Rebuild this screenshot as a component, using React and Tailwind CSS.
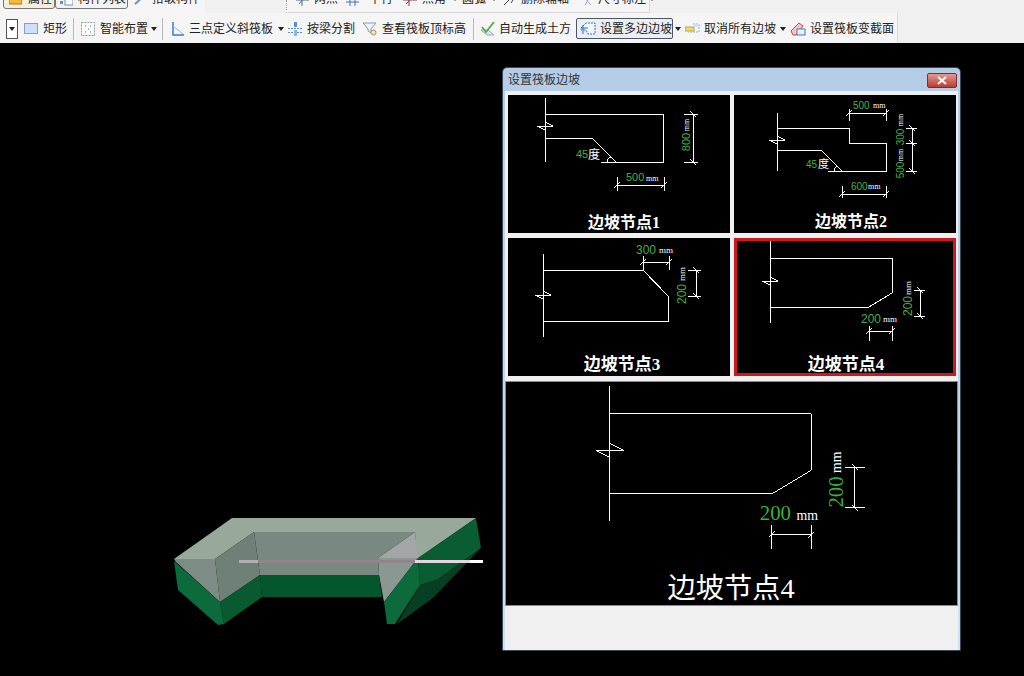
const SANS = '"Liberation Sans","Noto Sans CJK SC",sans-serif'
const SERIF = '"Liberation Serif","Noto Sans CJK SC",serif'
const GREEN = "#45b045"

function Arrow({ className }) {
  return <span className={`w-0 h-0 border-x-[3px] border-x-transparent border-t-[4px] border-t-[#222] ${className}`}></span>
}

function Sep({ className }) {
  return <span className={`w-px h-[22px] bg-[#b8b8b8] ${className}`}></span>
}

function Icon({ className, w = 15, children }) {
  return (
    <svg width={w} height="16" viewBox={`0 0 ${w} 16`} className={`shrink-0 ${className}`}>
      {children}
    </svg>
  )
}

function Label({ className, children }) {
  return <span className={`whitespace-nowrap ${className}`}>{children}</span>
}

function TopBar() {
  return (
    <div className="h-[13px] flex overflow-hidden text-xs leading-4 text-[#222]">
      <div className="w-[205px] h-[13px] bg-[#f5f5f5]">
        <div className="h-[20px] -mt-[11px] flex items-center">
          <div className="ml-[3px] w-[52px] h-[20px] flex items-center border border-[#777] rounded-[3px] bg-[#f7edd8]">
            <Icon w={13} className="ml-[5px]">
              <rect x="0" y="4" width="13" height="9" fill="#f2b93c" stroke="#a8752a" />
              <path d="M2 9l4-3 2 2 3-2" stroke="#fff" fill="none" />
            </Icon>
            <Label className="ml-[6px]">属性</Label>
          </div>
          <div className="w-[73px] h-[20px] flex items-center border border-[#777] rounded-[3px] bg-[#f2f2f2]">
            <Icon w={13} className="ml-[4px]">
              <rect x="0" y="5" width="3" height="3" fill="#6d8fc0" />
              <rect x="0" y="10" width="3" height="3" fill="#6d8fc0" />
              <rect x="5" y="3" width="8" height="11" fill="#fff" stroke="#6d8fc0" />
            </Icon>
            <Label className="ml-[5px]">构件列表</Label>
          </div>
          <Icon w={13} className="ml-[5px]">
            <path d="M2 13L11 5" stroke="#6d8fc0" strokeWidth="2" />
          </Icon>
          <Label className="ml-[6px]">拾取构件</Label>
        </div>
      </div>
      <div className="w-[80px] bg-[#f0f0f0]"></div>
      <div className="w-[365px] h-[13px] flex items-start bg-[#f5f5f5] border-r border-b border-[#d8d8d8]">
        <span className="w-[2px] h-[10px] ml-px border-l border-dotted border-[#999]"></span>
        <div className="flex items-center -mt-[9px]">
          <Icon w={13} className="ml-[9px]">
            <path d="M0 9H13M3 13L10 5M6 5V15" stroke="#5a6a80" fill="none" />
          </Icon>
          <Label className="ml-[5px]">两点</Label>
          <Icon w={13} className="ml-[8px]">
            <path d="M0 7H13M0 11H13M4 4V15M9 4V15" stroke="#4a6fb0" fill="none" />
          </Icon>
          <Label className="ml-[10px]">平行</Label>
          <Icon w={15} className="ml-[10px]">
            <path d="M0 9H14M3 13L11 5M6 5V15" stroke="#8a3a4a" fill="none" />
          </Icon>
          <Label className="ml-[4px]">点角</Label>
          <Arrow className="ml-[6px]" />
          <Label className="ml-[4px]">圆弧</Label>
          <Arrow className="ml-[5px]" />
          <Icon w={13} className="ml-[6px]">
            <path d="M1 14L8 7M8 12L12 6" stroke="#444" fill="none" />
          </Icon>
          <Label className="ml-[5px]">删除辅轴</Label>
          <Icon w={12} className="ml-[12px]">
            <path d="M2 5L10 14M9 6L4 14" stroke="#aab" fill="none" />
          </Icon>
          <Label className="ml-[5px]">尺寸标注</Label>
          <Arrow className="ml-[3px]" />
        </div>
      </div>
    </div>
  )
}

function ToolBar() {
  return (
    <div className="h-[30px] flex">
      <div className="w-[898px] h-[30px] pt-px flex items-center bg-[#f5f5f5] border-r border-[#d8d8d8] text-xs text-[#222]">
        <button className="ml-[6px] w-[12px] h-[20px] flex items-center justify-center bg-white border border-[#555]">
          <Arrow className="" />
        </button>
        <Icon w={14} className="ml-[6px]">
          <rect x="0.5" y="2.5" width="13" height="10" fill="#cfe0f7" stroke="#7f9fcc" />
        </Icon>
        <Label className="ml-[5px]">矩形</Label>
        <Sep className="ml-[6px]" />
        <Icon w={14} className="ml-[7px]">
          <rect x="0.5" y="1.5" width="13" height="13" fill="#fff" stroke="#8a9aaa" strokeDasharray="2 1" />
          <path d="M4 5h1M9 5h1M7 8h1M4 11h1M9 11h1" stroke="#2f7f4f" />
        </Icon>
        <Label className="ml-[5px]">智能布置</Label>
        <Arrow className="ml-[3px]" />
        <Sep className="ml-[5px]" />
        <Icon w={14} className="ml-[8px]">
          <path d="M2 1V14H13" stroke="#3f79c9" strokeWidth="1.5" fill="none" />
          <path d="M2 5L12 13" stroke="#8fb4e0" fill="none" />
        </Icon>
        <Label className="ml-[4px]">三点定义斜筏板</Label>
        <Arrow className="ml-[5px]" />
        <Icon w={15} className="ml-[4px]">
          <path d="M0 7.5H15M0 11.5H15" stroke="#5c8fd0" strokeDasharray="2 1" />
          <rect x="6" y="1" width="3" height="5" fill="#5c8fd0" />
          <rect x="6" y="9" width="3" height="6" fill="#8fb4e0" />
        </Icon>
        <Label className="ml-[4px]">按梁分割</Label>
        <Icon w={16} className="ml-[7px]">
          <path d="M1 2H14L9 8V12L6 10V8Z" fill="#eef3f9" stroke="#8a9ab0" />
          <circle cx="11.5" cy="11.5" r="2.5" fill="#f3e3c0" stroke="#b88a4a" />
        </Icon>
        <Label className="ml-[4px]">查看筏板顶标高</Label>
        <Sep className="ml-[7px]" />
        <Icon w={15} className="ml-[6px]">
          <path d="M1 9L7 14H14L8 9Z" fill="#dfe6ee" stroke="#9aa8b8" />
          <path d="M2 6L6 11L14 1" stroke="#5cae4a" strokeWidth="2" fill="none" />
        </Icon>
        <Label className="ml-[4px]">自动生成土方</Label>
        <div className="ml-[5px] w-[97px] h-[21px] flex items-center rounded-[2px] border border-[#4c5560] bg-[#e9eff5]">
          <Icon w={16} className="ml-[3px]">
            <path d="M1 7L6 2H15V13H8L6 9H1Z" fill="#f4f8fc" stroke="#2f6fc0" strokeDasharray="2 1" />
            <path d="M1 7H8M3 4V13" stroke="#2f6fc0" fill="none" />
          </Icon>
          <Label className="ml-[4px]">设置多边边坡</Label>
        </div>
        <Arrow className="ml-[2px]" />
        <Icon w={15} className="ml-[4px]">
          <rect x="0" y="6" width="9" height="4" fill="#f0d878" stroke="#c4a440" />
          <path d="M8 3H14V11H3" stroke="#9ab0cc" fill="none" strokeDasharray="2 1" />
          <rect x="9" y="3" width="5" height="3" fill="#cfe0f7" />
        </Icon>
        <Label className="ml-[4px]">取消所有边坡</Label>
        <Arrow className="ml-[4px]" />
        <Icon w={16} className="ml-[4px]">
          <path d="M1 10L9 2L13 5L6 14H3Z" fill="#f2c4c4" stroke="#d0404a" />
          <rect x="7" y="8" width="8" height="6" fill="#e6effa" stroke="#4a7ac0" />
        </Icon>
        <Label className="ml-[4px]">设置筏板变截面</Label>
      </div>
    </div>
  )
}

function Break({ x, y, s = 8 }) {
  const h = s * 0.5
  return <path d={`M${x + s} ${y}H${x - s}L${x} ${y + h}M${x} ${y - h}L${x + s} ${y}`} stroke="#fff" fill="none" />
}

function Hdim({ x1, x2, y, top, bottom }) {
  return (
    <path
      d={`M${x1} ${y}H${x2}M${x1} ${top}V${bottom}M${x2} ${top}V${bottom}M${x1 - 3} ${y + 3}L${x1 + 3} ${y - 3}M${x2 - 3} ${y + 3}L${x2 + 3} ${y - 3}`}
      stroke="#fff"
      fill="none"
    />
  )
}

function Vdim({ x, ys, left, right }) {
  const first = ys[0]
  const last = ys[ys.length - 1]
  const ticks = ys.map((y) => `M${left} ${y}H${right}M${x - 3} ${y - 3}L${x + 3} ${y + 3}`).join("")
  return <path d={`M${x} ${first}V${last}${ticks}`} stroke="#fff" fill="none" />
}

function Num({ x, y, size = 11, children }) {
  return (
    <text x={x} y={y} fontSize={size} fill={GREEN} fontFamily={SANS}>
      {children}
    </text>
  )
}

function Mm({ x, y, size = 8, children = "mm" }) {
  return (
    <text x={x} y={y} fontSize={size} fill="#fff" fontFamily={SERIF}>
      {children}
    </text>
  )
}

function Rot({ x, y, size = 11, fill = GREEN, font = SANS, children }) {
  return (
    <text x={x} y={y} fontSize={size} fill={fill} fontFamily={font} textAnchor="middle" dominantBaseline="central" transform={`rotate(-90 ${x} ${y})`}>
      {children}
    </text>
  )
}

function Caption({ x, y, size = 16, weight = 700, children }) {
  return (
    <text x={x} y={y} fontSize={size} fontWeight={weight} fill="#fff" fontFamily={SERIF} textAnchor="middle">
      {children}
    </text>
  )
}

function Diagram({ x, y, w, h, className = "", children }) {
  return (
    <svg viewBox={`${x} ${y} ${w} ${h}`} width={w} height={h} className={`block bg-black ${className}`}>
      <g shapeRendering="crispEdges">{children}</g>
    </svg>
  )
}

function Node1() {
  return (
    <Diagram x={508} y={95} w={222} h={138}>
      <path d="M545 98V162M545 114H663V162H601M545 138H592L616 162" stroke="#fff" fill="none" />
      <Break x={545} y={126} />
      <path d="M607 162Q608 157 612 157" stroke="#fff" fill="none" />
      <Num x={576} y={158}>45</Num>
      <text x={588} y={159} fontSize={12} fill="#fff" fontFamily={SANS}>度</text>
      <Vdim x={693} ys={[114, 162]} left={684} right={698} />
      <Rot x={686} y={142}>800</Rot>
      <Rot x={686} y={125} size={8} fill="#fff" font={SERIF}>mm</Rot>
      <Hdim x1={617} x2={664} y={185} top={177} bottom={191} />
      <Num x={626} y={181}>500</Num>
      <Mm x={646} y={181}>mm</Mm>
      <Caption x={624} y={228}>边坡节点1</Caption>
    </Diagram>
  )
}

function Node2() {
  return (
    <Diagram x={734} y={95} w={222} h={138}>
      <path d="M777 113V171M777 128H849V143H886V171H828M777 150H821L842 171" stroke="#fff" fill="none" />
      <Break x={777} y={140} />
      <path d="M834 171Q835 166 838 166" stroke="#fff" fill="none" />
      <Num x={806} y={168} size={10}>45</Num>
      <text x={818} y={168} fontSize={11} fill="#fff" fontFamily={SANS}>度</text>
      <Hdim x1={849} x2={886} y={113} top={109} bottom={121} />
      <Num x={853} y={109} size={10}>500</Num>
      <Mm x={873} y={108} size={8}>mm</Mm>
      <Vdim x={912} ys={[128, 143, 171]} left={906} right={917} />
      <Rot x={900} y={137} size={10}>300</Rot>
      <Rot x={900} y={120} size={8} fill="#fff" font={SERIF}>mm</Rot>
      <Rot x={900} y={170} size={10}>500</Rot>
      <Rot x={900} y={155} size={8} fill="#fff" font={SERIF}>mm</Rot>
      <Hdim x1={842} x2={886} y={194} top={186} bottom={198} />
      <Num x={851} y={190} size={10}>600</Num>
      <Mm x={868} y={189} size={8}>mm</Mm>
      <Caption x={851} y={227}>边坡节点2</Caption>
    </Diagram>
  )
}

function Node3() {
  return (
    <Diagram x={508} y={238} w={222} h={138}>
      <path d="M543 254V337M543 270H643L668 296V321H543" stroke="#fff" fill="none" />
      <Break x={543} y={295} />
      <Hdim x1={643} x2={669} y={262} top={256} bottom={270} />
      <Num x={636} y={254} size={12}>300</Num>
      <Mm x={659} y={253} size={9}>mm</Mm>
      <Vdim x={696} ys={[270, 296]} left={688} right={701} />
      <Rot x={682} y={294} size={12}>200</Rot>
      <Rot x={682} y={274} size={9} fill="#fff" font={SERIF}>mm</Rot>
      <Caption x={622} y={370} size={17}>边坡节点3</Caption>
    </Diagram>
  )
}

function Node4() {
  return (
    <div className="border-[3px] border-[#cc1820]">
      <Diagram x={737} y={241} w={216} h={132}>
        <path d="M770 241V323M770 258H892V293L869 307H770" stroke="#fff" fill="none" />
        <Break x={770} y={281} />
        <Hdim x1={869} x2={892} y={331} top={326} bottom={341} />
        <Num x={861} y={323} size={12}>200</Num>
        <Mm x={883} y={322} size={9}>mm</Mm>
        <Vdim x={920} ys={[290, 316]} left={914} right={925} />
        <Rot x={908} y={306} size={12}>200</Rot>
        <Rot x={908} y={288} size={9} fill="#fff" font={SERIF}>mm</Rot>
        <Caption x={846} y={370} size={17}>边坡节点4</Caption>
      </Diagram>
    </div>
  )
}

function Preview() {
  return (
    <Diagram x={505} y={381} w={453} h={225} className="border border-[#8a8a8a]">
      <path d="M608 385V521M608 413H812V470L772 494H608" stroke="#fff" fill="none" />
      <Break x={609} y={450} s={14} />
      <Hdim x1={772} x2={812} y={535} top={525} bottom={549} />
      <text x={760} y={520} fontSize={21} fill="#36b336" fontFamily={SERIF}>200</text>
      <Mm x={797} y={520} size={14}>mm</Mm>
      <Vdim x={856} ys={[467, 508]} left={846} right={866} />
      <text x={837} y={492} fontSize={21} fill="#36b336" fontFamily={SERIF} textAnchor="middle" dominantBaseline="central" transform="rotate(-90 837 492)">200</text>
      <Rot x={837} y={462} size={14} fill="#fff" font={SERIF}>mm</Rot>
      <Caption x={731} y={599} size={28.5} weight={400}>边坡节点4</Caption>
    </Diagram>
  )
}

function Dialog() {
  return (
    <div className="absolute left-[502px] top-[67px] w-[459px] h-[584px] flex flex-col rounded-t-[5px] border border-[#3c4a58] bg-gradient-to-b from-[#b4cce6] to-[#cfe0f1] text-xs">
      <div className="h-[24px] shrink-0 flex items-center justify-between pl-[5px] pr-[3px] text-[#333]">
        <span>设置筏板边坡</span>
        <button className="w-[30px] h-[15px] flex items-center justify-center rounded-[2px] border border-[#7a3030] bg-gradient-to-b from-[#e09a90] to-[#b83a30]">
          <svg width="12" height="9" viewBox="0 0 12 9">
            <path d="M2 1l8 7M10 1L2 8" stroke="#fff" strokeWidth="2" />
          </svg>
        </button>
      </div>
      <div className="mx-[2px] flex-1 flex flex-col bg-[#f0f0f0] border border-transparent -mt-px box-border">
        <div className="grid grid-cols-[222px_222px] gap-x-[4px] gap-y-[5px] pl-[2px] pt-[3px]">
          <Node1 />
          <Node2 />
          <Node3 />
          <Node4 />
        </div>
        <div className="mt-[5px] -ml-px">
          <Preview />
        </div>
      </div>
    </div>
  )
}

function Model() {
  return (
    <svg width="320" height="120" viewBox="170 512 320 120" className="absolute left-[170px] top-[512px]">
      <polygon points="174,559 232,518 476,518 417,559 415,532 254,532 215,559" fill="#98a99c" />
      <polygon points="215,559 254,532 260,575 220,602" fill="#6f8077" />
      <polygon points="174,559 215,559 220,602 176,562" fill="#7d8d85" />
      <polygon points="254,532 415,532 378,558 379,575 260,575" fill="#79897f" />
      <polygon points="378,558 415,532 418,558" fill="#a3a6a6" />
      <polygon points="378,558 418,558 384,602 379,575" fill="#8b9791" />
      <polygon points="174,561 220,602 224,624 218,625 178,590" fill="#0b6b3c" />
      <polygon points="220,602 260,575 262,597 224,624" fill="#0a5a31" />
      <polygon points="260,575 379,575 382,597 262,597" fill="#04562c" />
      <polygon points="418,558 476,518 481,548 437,580 420,585" fill="#0a5c33" />
      <polygon points="420,585 437,580 481,548 433,598 397,624" fill="#063f24" />
      <polygon points="384,602 418,558 420,585 395,624 387,624" fill="#0b6b3c" />
      <rect x="239" y="560" width="19" height="3" fill="#b5aeb0" />
      <rect x="258" y="560" width="157" height="3" fill="#8f858a" />
      <rect x="415" y="560" width="55" height="3" fill="#e8d5df" />
      <rect x="470" y="560" width="13" height="3" fill="#ffffff" />
    </svg>
  )
}

export default function App() {
  return (
    <div className="relative w-[1024px] h-[676px] overflow-hidden bg-black font-['Liberation_Sans','Noto_Sans_CJK_SC',sans-serif]">
      <div className="h-[43px] bg-[#f0f0f0]">
        <TopBar />
        <ToolBar />
      </div>
      <Model />
      <Dialog />
    </div>
  )
}
